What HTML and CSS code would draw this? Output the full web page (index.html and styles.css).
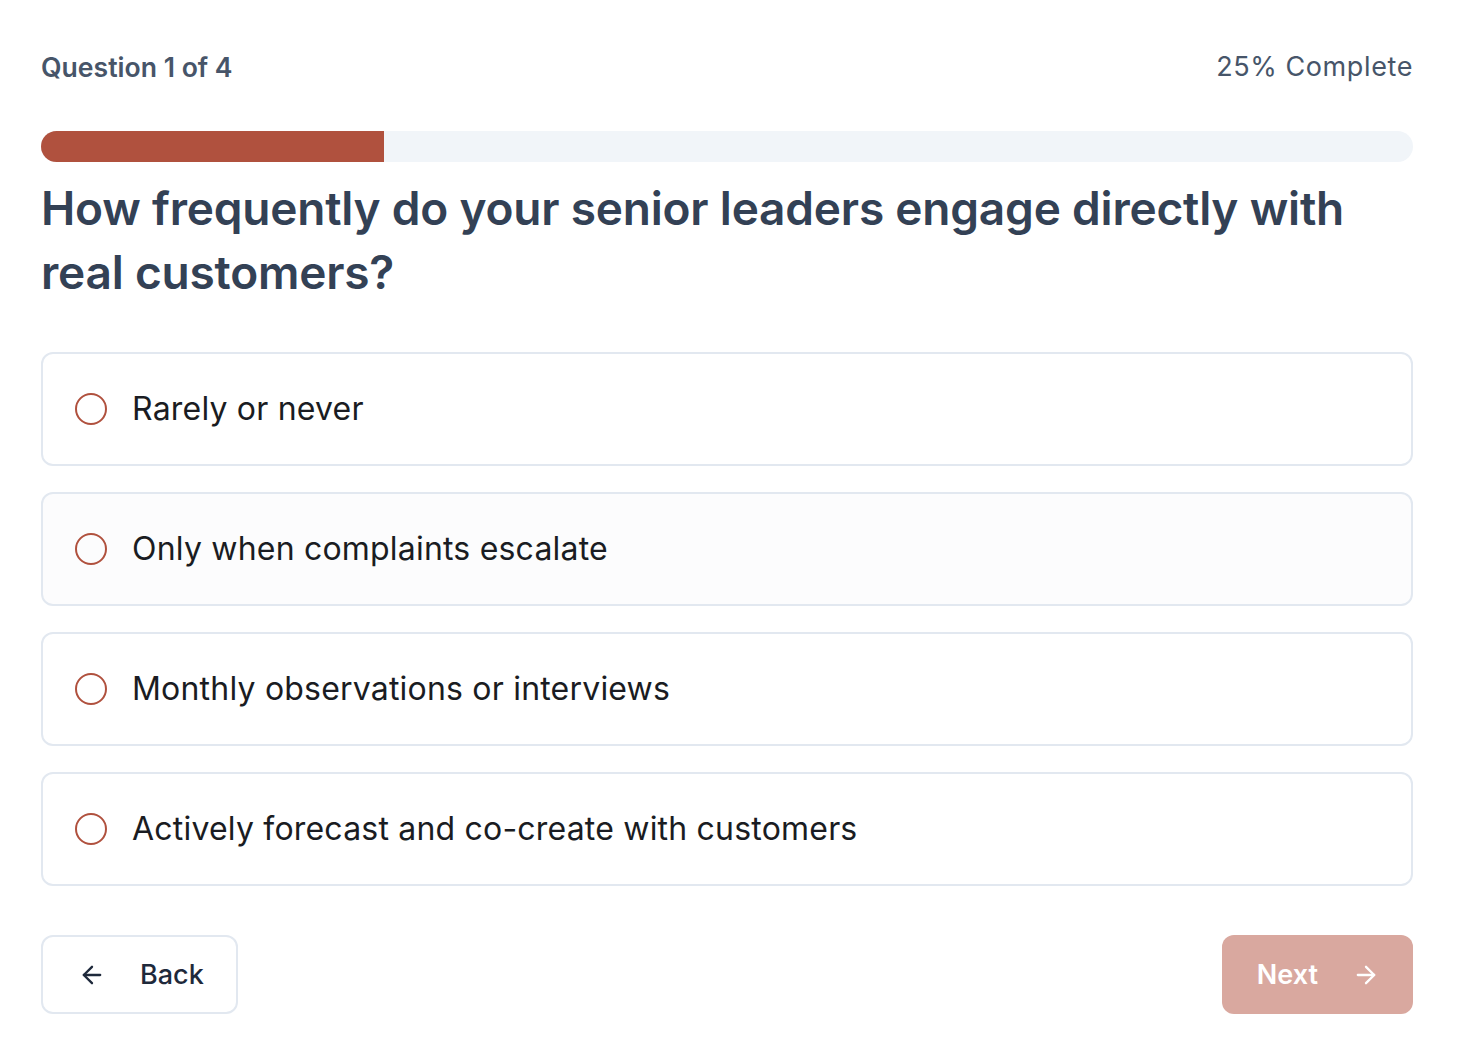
FILE: index.html
```html
<!DOCTYPE html>
<html lang="en">
<head>
<meta charset="utf-8">
<title>Assessment</title>
<link rel="stylesheet" href="styles.css">
</head>
<body>
<main class="card">
  <div class="meta">
    <span class="meta-step">Question 1 of 4</span>
    <span class="meta-pct">25% Complete</span>
  </div>
  <div class="track"><div class="fill" style="width:25%"></div></div>
  <h1 class="question">How frequently do your senior leaders engage directly with real customers?</h1>
  <div class="options">
    <label class="option"><span class="radio"></span><span class="opt-text">Rarely or never</span></label>
    <label class="option option-hover"><span class="radio"></span><span class="opt-text">Only when complaints escalate</span></label>
    <label class="option"><span class="radio"></span><span class="opt-text">Monthly observations or interviews</span></label>
    <label class="option"><span class="radio"></span><span class="opt-text">Actively forecast and co-create with customers</span></label>
  </div>
  <div class="nav">
    <button class="btn btn-back" type="button">
      <svg class="icon" viewBox="0 0 24 24" fill="none" stroke="currentColor" stroke-width="2" stroke-linecap="round" stroke-linejoin="round"><path d="M19 12H5"/><path d="M12 19l-7-7 7-7"/></svg>
      <span>Back</span>
    </button>
    <button class="btn btn-next" type="button" disabled>
      <span>Next</span>
      <svg class="icon" viewBox="0 0 24 24" fill="none" stroke="currentColor" stroke-width="2" stroke-linecap="round" stroke-linejoin="round"><path d="M5 12h14"/><path d="M12 5l7 7-7 7"/></svg>
    </button>
  </div>
</main>
</body>
</html>
```
FILE: styles.css
```css
* { box-sizing: border-box; }
html, body { margin: 0; padding: 0; background: #ffffff; }
body { font-family: Inter, "Noto Sans", sans-serif; color: #1e293b; }

.card {
  padding: 49px 44px 40px 41px;
}

.meta {
  display: flex;
  justify-content: space-between;
  align-items: center;
  font-size: 27px;
  line-height: 36px;
  color: #475569;
}
.meta-step { font-weight: 600; font-size: 26.6px; letter-spacing: 0; }
.meta-pct { font-weight: 400; letter-spacing: 0.6px; }

.track {
  margin-top: 46px;
  height: 31px;
  background: #f1f5f9;
  border-radius: 16px;
  overflow: hidden;
}
.fill { height: 100%; background: #b0513e; }

.question {
  margin: 14px 0 0 0;
  font-size: 46px;
  line-height: 64px;
  font-weight: 600;
  color: #334155;
  letter-spacing: -0.2px;
}

.options {
  margin-top: 48px;
  display: flex;
  flex-direction: column;
  gap: 26px;
}
.option {
  display: flex;
  align-items: center;
  gap: 25px;
  height: 114px;
  padding: 0 32px;
  border: 2px solid #e2e8f0;
  border-radius: 12px;
  background: #ffffff;
}
.option-hover { background: #fcfcfd; }
.radio {
  width: 32px;
  height: 32px;
  flex: none;
  border: 2px solid #b0513e;
  border-radius: 50%;
}
.opt-text {
  font-size: 32px;
  line-height: 40px;
  color: #1a1c22;
  letter-spacing: 0.2px;
}

.nav {
  margin-top: 49px;
  display: flex;
  justify-content: space-between;
}
.btn {
  display: flex;
  align-items: center;
  height: 79px;
  border-radius: 12px;
  font-family: Inter, "Noto Sans", sans-serif;
  font-size: 27px;
  cursor: pointer;
}
.btn .icon { width: 28px; height: 28px; flex: none; }
.btn-back {
  gap: 34px;
  padding: 0 32px 0 35px;
  background: #ffffff;
  border: 2px solid #e2e8f0;
  color: #1e293b;
  font-weight: 500;
}
.btn-next {
  gap: 34px;
  padding: 0 33px 0 35px;
  background: #d9a89f;
  border: 0;
  color: #ffffff;
  font-weight: 600;
}
```
